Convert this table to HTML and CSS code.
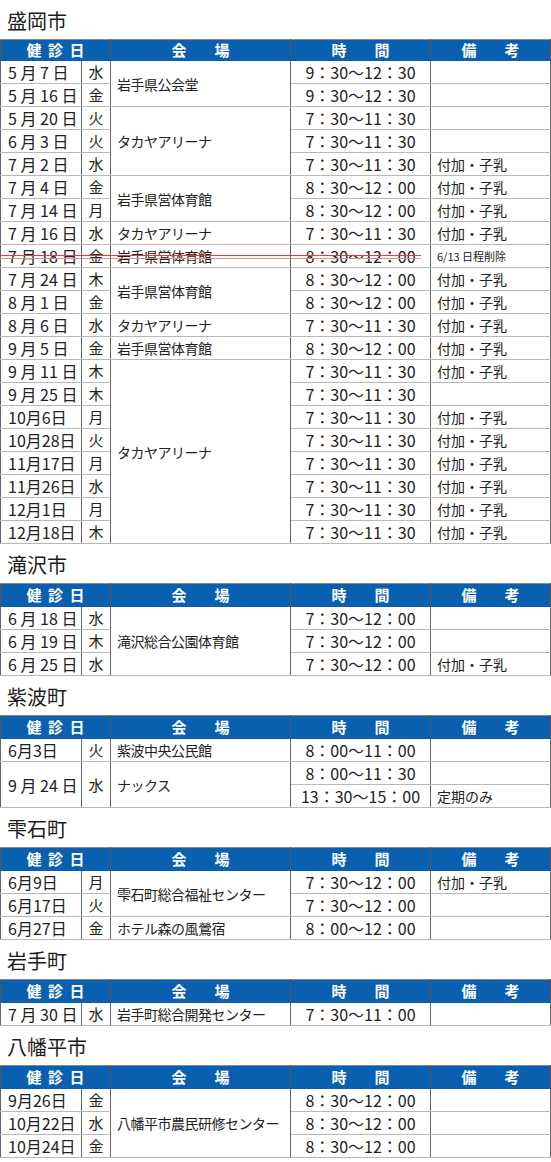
FILE: index.html
```html
<!DOCTYPE html>
<html lang="ja">
<head>
<meta charset="utf-8">
<title>健診日程</title>
<link rel="stylesheet" href="styles.css">
</head>
<body>
<section class="area area-first">
  <h2 class="area-title">盛岡市</h2>
  <table class="schedule">
    <colgroup><col class="c-date"><col class="c-wd"><col class="c-venue"><col class="c-time"><col class="c-note"></colgroup>
    <thead><tr><th colspan="2"><span class="sp-date">健診日</span></th><th><span class="sp-wide">会場</span></th><th><span class="sp-wide">時間</span></th><th><span class="sp-wide">備考</span></th></tr></thead>
    <tbody>
      <tr><td class="date">5 月 7 日</td><td class="wd">水</td><td class="venue" rowspan="2">岩手県公会堂</td><td class="time">9：30～12：30</td><td class="note"></td></tr>
      <tr><td class="date">5 月 16 日</td><td class="wd">金</td><td class="time">9：30～12：30</td><td class="note"></td></tr>
      <tr><td class="date">5 月 20 日</td><td class="wd">火</td><td class="venue" rowspan="3">タカヤアリーナ</td><td class="time">7：30～11：30</td><td class="note"></td></tr>
      <tr><td class="date">6 月 3 日</td><td class="wd">火</td><td class="time">7：30～11：30</td><td class="note"></td></tr>
      <tr><td class="date">7 月 2 日</td><td class="wd">水</td><td class="time">7：30～11：30</td><td class="note">付加・子乳</td></tr>
      <tr><td class="date">7 月 4 日</td><td class="wd">金</td><td class="venue" rowspan="2">岩手県営体育館</td><td class="time">8：30～12：00</td><td class="note">付加・子乳</td></tr>
      <tr><td class="date">7 月 14 日</td><td class="wd">月</td><td class="time">8：30～12：00</td><td class="note">付加・子乳</td></tr>
      <tr><td class="date">7 月 16 日</td><td class="wd">水</td><td class="venue">タカヤアリーナ</td><td class="time">7：30～11：30</td><td class="note">付加・子乳</td></tr>
      <tr><td class="date struck">7 月 18 日<span class="strike"></span></td><td class="wd">金</td><td class="venue">岩手県営体育館</td><td class="time">8：30～12：00</td><td class="note note-small">6/13 日程削除</td></tr>
      <tr><td class="date">7 月 24 日</td><td class="wd">木</td><td class="venue" rowspan="2">岩手県営体育館</td><td class="time">8：30～12：00</td><td class="note">付加・子乳</td></tr>
      <tr><td class="date">8 月 1 日</td><td class="wd">金</td><td class="time">8：30～12：00</td><td class="note">付加・子乳</td></tr>
      <tr><td class="date">8 月 6 日</td><td class="wd">水</td><td class="venue">タカヤアリーナ</td><td class="time">7：30～11：30</td><td class="note">付加・子乳</td></tr>
      <tr><td class="date">9 月 5 日</td><td class="wd">金</td><td class="venue">岩手県営体育館</td><td class="time">8：30～12：00</td><td class="note">付加・子乳</td></tr>
      <tr><td class="date">9 月 11 日</td><td class="wd">木</td><td class="venue" rowspan="8">タカヤアリーナ</td><td class="time">7：30～11：30</td><td class="note">付加・子乳</td></tr>
      <tr><td class="date">9 月 25 日</td><td class="wd">木</td><td class="time">7：30～11：30</td><td class="note"></td></tr>
      <tr><td class="date">10月6日</td><td class="wd">月</td><td class="time">7：30～11：30</td><td class="note">付加・子乳</td></tr>
      <tr><td class="date">10月28日</td><td class="wd">火</td><td class="time">7：30～11：30</td><td class="note">付加・子乳</td></tr>
      <tr><td class="date">11月17日</td><td class="wd">月</td><td class="time">7：30～11：30</td><td class="note">付加・子乳</td></tr>
      <tr><td class="date">11月26日</td><td class="wd">水</td><td class="time">7：30～11：30</td><td class="note">付加・子乳</td></tr>
      <tr><td class="date">12月1日</td><td class="wd">月</td><td class="time">7：30～11：30</td><td class="note">付加・子乳</td></tr>
      <tr><td class="date">12月18日</td><td class="wd">木</td><td class="time">7：30～11：30</td><td class="note">付加・子乳</td></tr>
    </tbody>
  </table>
</section>

<section class="area">
  <h2 class="area-title">滝沢市</h2>
  <table class="schedule">
    <colgroup><col class="c-date"><col class="c-wd"><col class="c-venue"><col class="c-time"><col class="c-note"></colgroup>
    <thead><tr><th colspan="2"><span class="sp-date">健診日</span></th><th><span class="sp-wide">会場</span></th><th><span class="sp-wide">時間</span></th><th><span class="sp-wide">備考</span></th></tr></thead>
    <tbody>
      <tr><td class="date">6 月 18 日</td><td class="wd">水</td><td class="venue" rowspan="3">滝沢総合公園体育館</td><td class="time">7：30～12：00</td><td class="note"></td></tr>
      <tr><td class="date">6 月 19 日</td><td class="wd">木</td><td class="time">7：30～12：00</td><td class="note"></td></tr>
      <tr><td class="date">6 月 25 日</td><td class="wd">水</td><td class="time">7：30～12：00</td><td class="note">付加・子乳</td></tr>
    </tbody>
  </table>
</section>

<section class="area">
  <h2 class="area-title">紫波町</h2>
  <table class="schedule">
    <colgroup><col class="c-date"><col class="c-wd"><col class="c-venue"><col class="c-time"><col class="c-note"></colgroup>
    <thead><tr><th colspan="2"><span class="sp-date">健診日</span></th><th><span class="sp-wide">会場</span></th><th><span class="sp-wide">時間</span></th><th><span class="sp-wide">備考</span></th></tr></thead>
    <tbody>
      <tr><td class="date">6月3日</td><td class="wd">火</td><td class="venue">紫波中央公民館</td><td class="time">8：00～11：00</td><td class="note"></td></tr>
      <tr><td class="date" rowspan="2">9 月 24 日</td><td class="wd" rowspan="2">水</td><td class="venue" rowspan="2">ナックス</td><td class="time">8：00～11：30</td><td class="note"></td></tr>
      <tr><td class="time">13：30～15：00</td><td class="note">定期のみ</td></tr>
    </tbody>
  </table>
</section>

<section class="area">
  <h2 class="area-title">雫石町</h2>
  <table class="schedule">
    <colgroup><col class="c-date"><col class="c-wd"><col class="c-venue"><col class="c-time"><col class="c-note"></colgroup>
    <thead><tr><th colspan="2"><span class="sp-date">健診日</span></th><th><span class="sp-wide">会場</span></th><th><span class="sp-wide">時間</span></th><th><span class="sp-wide">備考</span></th></tr></thead>
    <tbody>
      <tr><td class="date">6月9日</td><td class="wd">月</td><td class="venue" rowspan="2">雫石町総合福祉センター</td><td class="time">7：30～12：00</td><td class="note">付加・子乳</td></tr>
      <tr><td class="date">6月17日</td><td class="wd">火</td><td class="time">7：30～12：00</td><td class="note"></td></tr>
      <tr><td class="date">6月27日</td><td class="wd">金</td><td class="venue">ホテル森の風鶯宿</td><td class="time">8：00～12：00</td><td class="note"></td></tr>
    </tbody>
  </table>
</section>

<section class="area">
  <h2 class="area-title">岩手町</h2>
  <table class="schedule">
    <colgroup><col class="c-date"><col class="c-wd"><col class="c-venue"><col class="c-time"><col class="c-note"></colgroup>
    <thead><tr><th colspan="2"><span class="sp-date">健診日</span></th><th><span class="sp-wide">会場</span></th><th><span class="sp-wide">時間</span></th><th><span class="sp-wide">備考</span></th></tr></thead>
    <tbody>
      <tr><td class="date">7 月 30 日</td><td class="wd">水</td><td class="venue">岩手町総合開発センター</td><td class="time">7：30～11：00</td><td class="note"></td></tr>
    </tbody>
  </table>
</section>

<section class="area">
  <h2 class="area-title">八幡平市</h2>
  <table class="schedule">
    <colgroup><col class="c-date"><col class="c-wd"><col class="c-venue"><col class="c-time"><col class="c-note"></colgroup>
    <thead><tr><th colspan="2"><span class="sp-date">健診日</span></th><th><span class="sp-wide">会場</span></th><th><span class="sp-wide">時間</span></th><th><span class="sp-wide">備考</span></th></tr></thead>
    <tbody>
      <tr><td class="date">9月26日</td><td class="wd">金</td><td class="venue" rowspan="3">八幡平市農民研修センター</td><td class="time">8：30～12：00</td><td class="note"></td></tr>
      <tr><td class="date">10月22日</td><td class="wd">水</td><td class="time">8：30～12：00</td><td class="note"></td></tr>
      <tr><td class="date">10月24日</td><td class="wd">金</td><td class="time">8：30～12：00</td><td class="note"></td></tr>
    </tbody>
  </table>
</section>
</body>
</html>
```

FILE: styles.css
```css
body {
  margin: 0;
  background: #fff;
  color: #222;
  font-family: "Noto Sans CJK JP", "Noto Sans", sans-serif;
}

.area-title {
  margin: 0;
  height: 39px;
  padding-left: 7px;
  font-size: 20px;
  font-weight: 400;
  line-height: 41px;
  color: #1c1c1c;
  box-sizing: border-box;
}

.schedule {
  width: 550px;
  border-collapse: collapse;
  table-layout: fixed;
}

.c-date { width: 81px; }
.c-wd { width: 29px; }
.c-venue { width: 180px; }
.c-time { width: 140px; }
.c-note { width: 120px; }

.schedule th {
  height: 22px;
  padding: 0;
  background: #0a5fae;
  color: #fff;
  font-size: 15px;
  font-weight: 700;
  line-height: 20px;
  text-align: center;
  border-top: 1px solid #8a8a8a;
  border-bottom: 1px solid #0a5fae;
  border-left: 1px solid #555;
  border-right: 1px solid #555;
}

.area-first .schedule th {
  height: 20px;
  line-height: 18px;
}

.sp-date {
  letter-spacing: 6.5px;
  padding-left: 6.5px;
}

.sp-wide {
  letter-spacing: 28px;
  padding-left: 28px;
}

.schedule td {
  height: 22px;
  padding: 0;
  line-height: 20px;
  white-space: nowrap;
  border-top: 1px solid #b8b8b8;
  border-bottom: 1px solid #b8b8b8;
  border-left: 1px solid #666;
  border-right: 1px solid #666;
  vertical-align: middle;
}

.date {
  padding-left: 7px !important;
  font-size: 16px;
}

.wd {
  text-align: center;
  font-size: 15px;
}

.venue {
  padding-left: 6px !important;
  font-size: 14px;
  letter-spacing: -0.5px;
}

.time {
  text-align: center;
  font-size: 16px;
}

.note {
  padding-left: 6px !important;
  font-size: 14px;
}

.note-small {
  font-size: 11px;
}

.struck {
  position: relative;
}

.strike {
  position: absolute;
  left: -1px;
  top: 10px;
  width: 421px;
  height: 2px;
  border-top: 1px solid #e63c3c;
  border-bottom: 1px solid #f08888;
  pointer-events: none;
}
```
